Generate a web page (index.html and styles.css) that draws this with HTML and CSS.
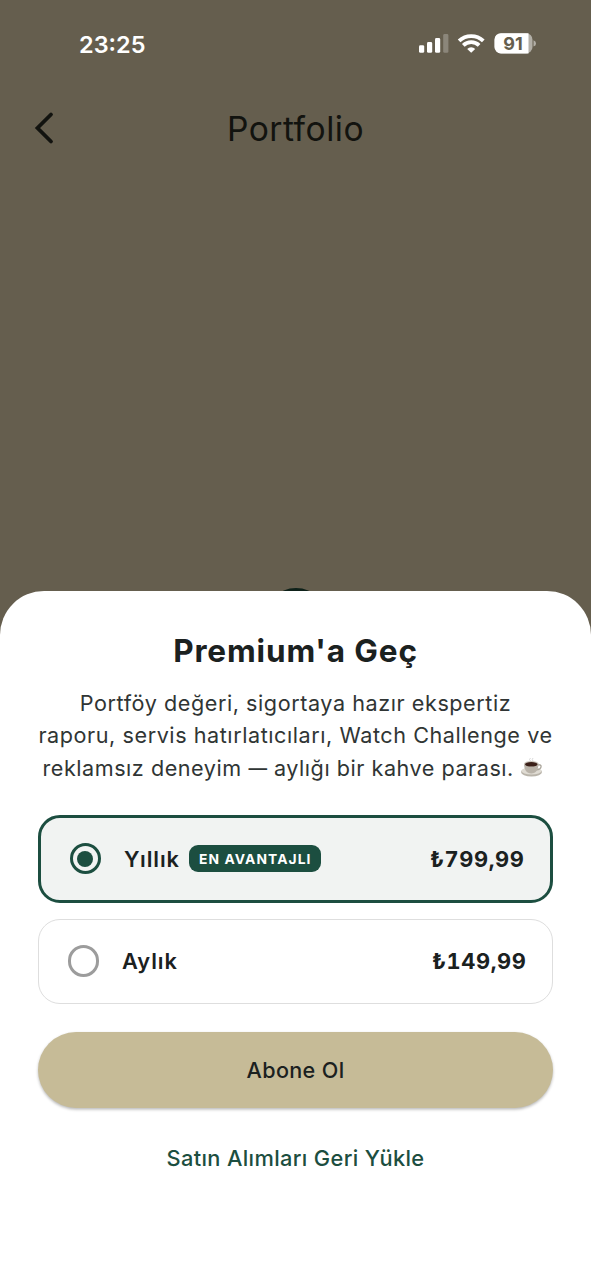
FILE: index.html
```html
<!DOCTYPE html>
<html lang="tr">
<head>
<meta charset="utf-8">
<title>Portfolio</title>
<link rel="stylesheet" href="styles.css">
</head>
<body>
<div class="screen">
  <header class="status">
    <span class="time">23:25</span>
    <svg class="indicators" width="120" height="24" viewBox="0 0 120 24">
      <g fill="#fff">
        <rect x="1" y="13.2" width="5.2" height="7.6" rx="1.4"/>
        <rect x="9" y="10" width="5.2" height="10.8" rx="1.4"/>
        <rect x="17" y="6" width="5.2" height="14.8" rx="1.4"/>
        <rect x="25.2" y="2" width="5.2" height="18.8" rx="1.4" opacity=".25"/>
      </g>
      <g fill="none" stroke="#fff" stroke-width="3.8">
        <path d="M41.1 8.9 A17.5 17.5 0 0 1 65.3 8.9"/>
        <path d="M45.3 13.4 A11.3 11.3 0 0 1 61.1 13.4"/>
      </g>
      <path d="M53.2 20.8 L49.2 16.9 A5.7 5.7 0 0 1 57.2 16.9 Z" fill="#fff"/>
      <rect x="76.5" y="1.2" width="38" height="20.2" rx="6.5" fill="#fff" opacity=".5"/>
      <path d="M83 1.2 H110.5 V21.4 H83 A6.5 6.5 0 0 1 76.5 14.9 V7.7 A6.5 6.5 0 0 1 83 1.2 Z" fill="#fff"/>
      <path d="M115.5 8.3 Q118 9 118 11.4 Q118 13.8 115.5 14.5 Z" fill="#fff" opacity=".5"/>
      <text class="level" x="95" y="17.8" text-anchor="middle">91</text>
    </svg>
  </header>
  <nav class="appbar">
    <svg class="back" width="24" height="36" viewBox="0 0 24 36"><path d="M19 4.5 L5.5 18 L19 31.5"/></svg>
    <h1 class="page-title">Portfolio</h1>
  </nav>
  <main class="backdrop"><div class="emblem"></div></main>
  <section class="sheet">
    <h2 class="title">Premium'a Geç</h2>
    <p class="desc"><span>Portföy değeri, sigortaya hazır ekspertiz</span><span class="middle">raporu, servis hatırlatıcıları, Watch Challenge ve</span><span class="last">reklamsız deneyim <span class="dash">—</span> aylığı bir kahve parası.
      <svg class="cup" width="24" height="22" viewBox="0 0 24 22">
        <path d="M10.5 4 Q8.5 2.5 10.5 1 M13 4 Q11.5 2.5 13 1" fill="none" stroke="#d9d9d9" stroke-width="1"/>
        <ellipse cx="11.5" cy="15" rx="10.5" ry="4.5" fill="#b9b4aa"/>
        <ellipse cx="11.5" cy="14" rx="10" ry="3.5" fill="#dfdbd3"/>
        <path d="M17.5 8 C23 6.5 22 13 16 12.8" fill="none" stroke="#aaa59b" stroke-width="1.3"/>
        <path d="M4 6.5 C4 12.5 6.5 16.5 11.3 16.5 C16 16.5 18.5 12.5 18.5 6.5 Z" fill="#b9b3a9"/>
        <ellipse cx="11.3" cy="6.9" rx="7.2" ry="3" fill="#cbc6bd"/>
        <ellipse cx="11.3" cy="7.3" rx="6.3" ry="2.3" fill="#3b2019"/>
      </svg></span></p>
    <div class="plans">
      <div class="plan selected">
        <span class="radio"></span><span class="name">Yıllık</span><span class="badge">EN AVANTAJLI</span><span class="price">₺799,99</span>
      </div>
      <div class="plan">
        <span class="radio"></span><span class="name">Aylık</span><span class="price">₺149,99</span>
      </div>
    </div>
    <button class="subscribe">Abone Ol</button>
    <a class="restore">Satın Alımları Geri Yükle</a>
  </section>
</div>
</body>
</html>
```
FILE: styles.css
```css
* { box-sizing: border-box; }
body { margin: 0; font-family: Inter, "Liberation Sans", sans-serif; color: #1b211f; }
.screen { width: 591px; height: 1280px; display: flex; flex-direction: column; background: #655e4e; overflow: hidden; }
.status { height: 88px; display: flex; justify-content: space-between; padding: 32px 53px 0 79px; }
.time { color: #fff; font-size: 23.5px; line-height: 25px; font-weight: 600; }
.indicators { flex: none; }
.level { font: 700 18px Inter, sans-serif; fill: #655e4e; }
.appbar { height: 80px; display: grid; grid-template-columns: 60px 1fr 60px; align-items: center; }
.back { margin-left: 32px; fill: none; stroke: #12130f; stroke-width: 3.8; stroke-linecap: round; stroke-linejoin: miter; }
.page-title { margin: 0; text-align: center; font-size: 33.6px; font-weight: 400; color: #12130f; letter-spacing: .5px; }
.backdrop { height: 423px; display: flex; flex-direction: column; justify-content: flex-end; align-items: center; }
.emblem { width: 64px; height: 64px; margin-bottom: -61px; border-radius: 50%; background: #0e2119; flex: none; }
.sheet { position: relative; height: 689px; flex: none; background: #fff; border-radius: 44px 44px 0 0; padding: 40px 38px 0; display: flex; flex-direction: column; }
.title { margin: 0; text-align: center; font-size: 31.5px; line-height: 40px; font-weight: 700; letter-spacing: .85px; }
.desc { margin: 16px -10px 0; display: flex; flex-direction: column; align-items: center; font-size: 21.6px; line-height: 32.5px; color: #303534; letter-spacing: .56px; white-space: nowrap; }
.middle { line-height: 31.5px; padding-bottom: 1px; }
.last { letter-spacing: .53px; padding-right: 4px; }
.dash { display: inline-block; transform: scaleX(.86); margin: 0 -1.5px; }
.cup { vertical-align: -3px; }
.plans { margin-top: 30px; display: flex; flex-direction: column; gap: 16px; }
.plan { height: 85px; display: flex; align-items: center; padding: 0 25.5px 0 28.5px; border: 1.5px solid #dedede; border-radius: 22px; font-size: 21.8px; font-weight: 700; letter-spacing: .9px; }
.selected { height: 88px; border: 3px solid #1c4e40; background: #f1f3f2; }
.radio { width: 31.5px; height: 31.5px; border: 3px solid #9c9c9c; border-radius: 50%; display: grid; place-items: center; margin-right: 23px; flex: none; }
.selected .radio { border-color: #1c4e40; }
.selected .radio::after { content: ""; width: 16px; height: 16px; border-radius: 50%; background: #1c4e40; }
.name { font-weight: 600; letter-spacing: .95px; }
.badge { margin-left: 9px; height: 27px; line-height: 28px; padding: 0 9px 0 10px; border-radius: 9px; background: #1c4e40; color: #fff; font-size: 13.8px; font-weight: 700; letter-spacing: 1.1px; }
.price { margin-left: auto; font-variant-numeric: tabular-nums; letter-spacing: .6px; }
.subscribe { margin-top: 28px; height: 76px; flex: none; border: 0; border-radius: 38px; background: #c6bb97; box-shadow: 0 1.5px 3px rgba(0,0,0,.28); color: #1b211f; font: 450 21.6px Inter, sans-serif; letter-spacing: .35px; }
.restore { margin-top: 33px; text-align: center; font-size: 21.8px; line-height: 34px; font-weight: 450; letter-spacing: .36px; color: #1c4e40; }
```
